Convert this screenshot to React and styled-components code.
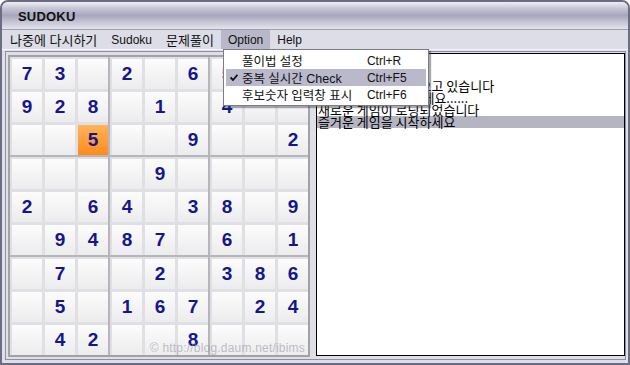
import React from "react";
import styled, { createGlobalStyle } from "styled-components";

const UI_FONT = `"Liberation Sans", "Noto Sans CJK KR", sans-serif`;

const PUZZLE = [
  "73_2_65__",
  "928_1_4__",
  "__5__9__2",
  "____9____",
  "2_64_38_9",
  "_9487_6_1",
  "_7__2_386",
  "_5_167_24",
  "_42__8___",
];

const LOG = [
  "Sudoku 1.0",
  "문제 준비중",
  "게임 데이터를 불러오고 있습니다",
  "잠시만 더 기다려 주세요......",
  "새로운 게임이 로딩되었습니다",
  "즐거운 게임을 시작하세요",
];

const MENU = ["나중에 다시하기", "Sudoku", "문제풀이", "Option", "Help"];

const OPTIONS = [
  { label: "풀이법 설정", key: "Ctrl+R" },
  { label: "중복 실시간 Check", key: "Ctrl+F5", checked: true },
  { label: "후보숫자 입력창 표시", key: "Ctrl+F6" },
];

const GlobalStyle = createGlobalStyle`
  html, body {
    margin: 0;
    background: #ffffff;
  }
  * {
    box-sizing: border-box;
  }
`;

const Window = styled.div`
  width: 630px;
  height: 365px;
  border: 2px solid #6c6c84;
  border-radius: 8px 8px 0 0;
  background: #dfdfe7;
  display: flex;
  flex-direction: column;
  overflow: hidden;
  font-family: ${UI_FONT};
`;

const TitleBar = styled.div`
  height: 27px;
  flex: none;
  display: flex;
  align-items: center;
  padding-left: 16px;
  padding-top: 1px;
  background: linear-gradient(#eeeef3 0%, #c4c4d4 25%, #a6a6bd 50%, #c6c6d5 75%, #e4e4ec 100%);
  font-size: 13px;
  font-weight: bold;
  color: #111;
  letter-spacing: 0.2px;
`;

const MenuBar = styled.div`
  height: 21px;
  flex: none;
  display: flex;
  align-items: stretch;
  padding-left: 1px;
  background: #dcdde7;
  border-top: 1px solid #9c9cb2;
  border-bottom: 1px solid #f6f6fa;
  font-size: 12px;
`;

const MenuItem = styled.div`
  position: relative;
  display: flex;
  align-items: center;
  padding: 0 7px;
  color: #111;
  font-size: ${(p) => (p.hangul ? "13px" : "12px")};
  background: ${(p) => (p.open ? "#b8b8ca" : "transparent")};
`;

const Dropdown = styled.div`
  position: absolute;
  top: 100%;
  left: 2px;
  width: 206px;
  padding: 2px;
  background: #ffffff;
  border: 1px solid #7c7c86;
  box-shadow: 2px 2px 1px rgba(60, 60, 70, 0.45);
  font-size: 12px;
  z-index: 5;
`;

const OptionRow = styled.div`
  height: 17px;
  display: flex;
  align-items: center;
  background: ${(p) => (p.active ? "#b9b9cb" : "transparent")};
  color: #111;
`;

const CheckSlot = styled.span`
  width: 16px;
  flex: none;
  display: flex;
  justify-content: center;
`;

const OptionLabel = styled.span`
  width: 125px;
  flex: none;
  font-size: 12.5px;
`;

const Body = styled.div`
  flex: 1;
  display: flex;
  padding: 1px 2px 3px 3px;
`;

const Client = styled.div`
  flex: 1;
  display: flex;
  align-items: flex-start;
  gap: 6px;
  padding: 1px 0 1px 2px;
  border: 1px solid #8e8ea4;
`;

const Board = styled.div`
  position: relative;
  margin-top: 2px;
  display: grid;
  grid-template-columns: repeat(3, 98px);
  grid-template-rows: repeat(3, 98px);
  gap: 2px;
  background: #b6b6ba;
  border: 2px solid #a2a2a6;
  flex: none;
`;

const Block = styled.div`
  display: grid;
  grid-template-columns: repeat(3, 30px);
  grid-template-rows: repeat(3, 30px);
  gap: 3px;
  padding: 2px 0 0 2px;
  background: #e0e0e4;
`;

const Cell = styled.div`
  display: flex;
  align-items: center;
  justify-content: center;
  font-family: "Liberation Sans", Arial, sans-serif;
  font-size: 19px;
  font-weight: bold;
  color: #16168c;
  background: ${(p) =>
    p.selected
      ? "linear-gradient(#ffb45a, #ff8a1e)"
      : "linear-gradient(#fcfcfc, #ececee)"};
`;

const Watermark = styled.div`
  position: absolute;
  right: 3px;
  bottom: 0;
  font-family: "Liberation Sans", Arial, sans-serif;
  font-size: 12px;
  color: rgba(150, 150, 160, 0.6);
  letter-spacing: 0.2px;
  pointer-events: none;
`;

const ListBox = styled.div`
  flex: 1;
  height: 303px;
  background: #ffffff;
  border: 1px solid #000;
  padding-top: 2px;
  font-family: "Noto Sans CJK KR", "Liberation Sans", sans-serif;
  font-size: 13px;
  color: #000;
`;

const LogLine = styled.div`
  height: 12px;
  line-height: 12px;
  padding-left: 1px;
  white-space: nowrap;
  background: ${(p) => (p.selected ? "#b4b4c2" : "transparent")};
`;

function Check() {
  return (
    <svg width="8" height="7" viewBox="0 0 8 7">
      <path d="M0.5 3.5 L3 6 L7.5 0.8" stroke="#111" strokeWidth="1.8" fill="none" />
    </svg>
  );
}

function OptionMenu() {
  return (
    <Dropdown>
      {OPTIONS.map((o) => (
        <OptionRow key={o.label} active={o.checked}>
          <CheckSlot>{o.checked && <Check />}</CheckSlot>
          <OptionLabel>{o.label}</OptionLabel>
          <span>{o.key}</span>
        </OptionRow>
      ))}
    </Dropdown>
  );
}

function SudokuBoard() {
  const blocks = [];
  for (let b = 0; b < 9; b++) {
    const br = Math.floor(b / 3) * 3;
    const bc = (b % 3) * 3;
    const cells = [];
    for (let i = 0; i < 9; i++) {
      const r = br + Math.floor(i / 3);
      const c = bc + (i % 3);
      const v = PUZZLE[r][c];
      cells.push(
        <Cell key={i} selected={r === 2 && c === 2}>
          {v === "_" ? "" : v}
        </Cell>
      );
    }
    blocks.push(<Block key={b}>{cells}</Block>);
  }
  return (
    <Board>
      {blocks}
      <Watermark>© http://blog.daum.net/ibims</Watermark>
    </Board>
  );
}

export default function App() {
  return (
    <>
      <GlobalStyle />
      <Window>
        <TitleBar>SUDOKU</TitleBar>
        <MenuBar>
          {MENU.map((m) => (
            <MenuItem
              key={m}
              open={m === "Option"}
              hangul={/[가-힣]/.test(m)}
            >
              {m}
              {m === "Option" && <OptionMenu />}
            </MenuItem>
          ))}
        </MenuBar>
        <Body>
          <Client>
            <SudokuBoard />
            <ListBox>
              {LOG.map((line, i) => (
                <LogLine key={i} selected={i === LOG.length - 1}>
                  {line}
                </LogLine>
              ))}
            </ListBox>
          </Client>
        </Body>
      </Window>
    </>
  );
}
